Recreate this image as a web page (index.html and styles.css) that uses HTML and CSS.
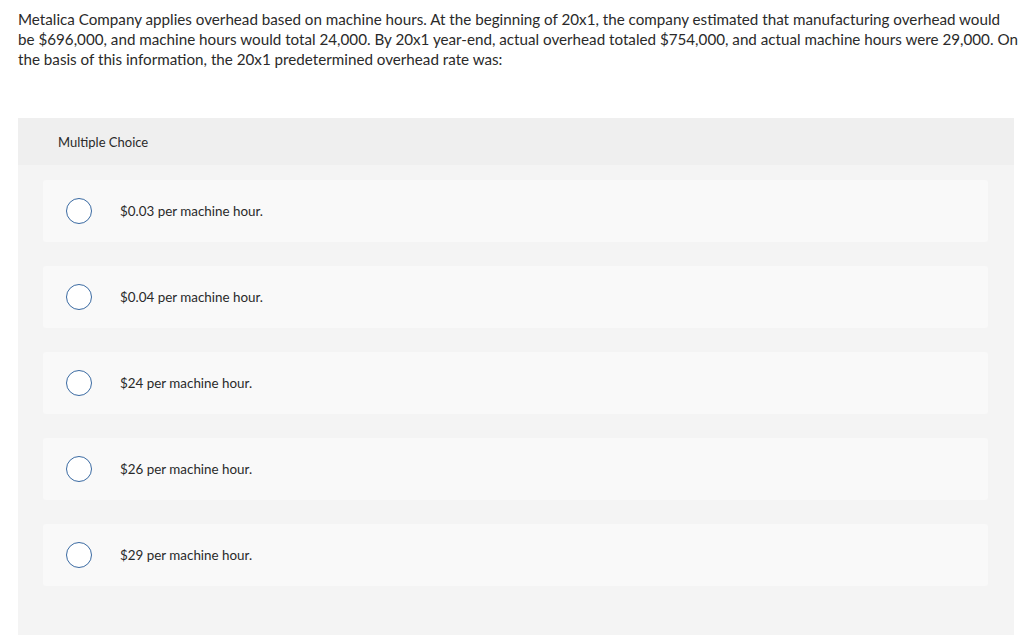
FILE: index.html
```html
<!DOCTYPE html>
<html>
<head>
<meta charset="utf-8">
<link rel="stylesheet" href="styles.css">
</head>
<body>
<p class="question">Metalica Company applies overhead based on machine hours. At the beginning of 20x1, the company estimated that manufacturing overhead would be $696,000, and machine hours would total 24,000. By 20x1 year-end, actual overhead totaled $754,000, and actual machine hours were 29,000. On the basis of this information, the 20x1 predetermined overhead rate was:</p>
<section class="panel">
  <div class="panel-head">Multiple Choice</div>
  <div class="panel-body">
    <div class="option"><span class="radio"></span><span class="label">$0.03 per machine hour.</span></div>
    <div class="option"><span class="radio"></span><span class="label">$0.04 per machine hour.</span></div>
    <div class="option"><span class="radio"></span><span class="label">$24 per machine hour.</span></div>
    <div class="option"><span class="radio"></span><span class="label">$26 per machine hour.</span></div>
    <div class="option"><span class="radio"></span><span class="label">$29 per machine hour.</span></div>
  </div>
</section>
</body>
</html>
```

FILE: styles.css
```css
html, body {
  margin: 0;
  padding: 0;
  background: #ffffff;
}
body {
  font-family: "Lato", "Liberation Sans", sans-serif;
  color: #2a2a2a;
  padding: 9px 10px 0 18px;
}
.question {
  margin: 0;
  font-size: 15.2px;
  line-height: 20px;
  width: 1000px;
}
.panel {
  margin-top: 49px;
  width: 996px;
  background: #f4f4f4;
}
.panel-head {
  background: #efefef;
  height: 47px;
  display: flex;
  align-items: center;
  padding-left: 40px;
  font-size: 13px;
}
.panel-body {
  padding: 15px 26px 49px 25px;
  display: flex;
  flex-direction: column;
  gap: 24px;
}
.option {
  height: 62px;
  background: #f9f9f9;
  border-radius: 3px;
  display: flex;
  align-items: center;
  padding-left: 23px;
}
.radio {
  width: 24px;
  height: 24px;
  border: 1px solid #3a6aa2;
  border-radius: 50%;
  background: #fff;
  flex: none;
}
.label {
  margin-left: 28px;
  font-size: 13.4px;
}
```
